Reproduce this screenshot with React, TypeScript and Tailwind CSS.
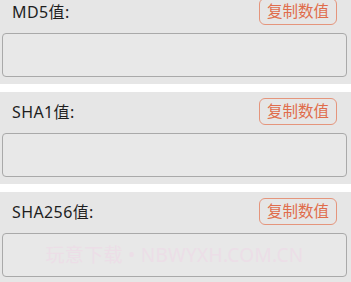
const rows = ["MD5值:", "SHA1值:", "SHA256值:"];

function HashRow({ label, mark }: { label: string; mark?: boolean }) {
  return (
    <div className="bg-[#e6e6e6] pt-[6px] pb-[7px]">
      <div className="flex items-center justify-between pl-3 pr-[14px]">
        <span className="text-[16px] text-[#1e1e1e] tracking-[0.4px]">{label}</span>
        <button className="h-[27px] w-[78px] rounded-[6px] border border-[#e5957c] text-[15.5px] leading-none text-[#e06c4b]">
          复制数值
        </button>
      </div>
      <div className="mt-2 ml-[2px] mr-[4px] flex h-[44px] items-center justify-center rounded-[4px] border border-[#a9a9a9] bg-[#e8e8e8]">
        {mark && (
          <span className="text-[19px] tracking-[0.3px] text-[#ecdee7]">玩意下载 • NBWYXH.COM.CN</span>
        )}
      </div>
    </div>
  );
}

export default function App() {
  return (
    <div
      className="h-[282px] w-[351px] overflow-hidden bg-white"
      style={{ fontFamily: '"Noto Sans", "Noto Sans CJK SC", sans-serif' }}
    >
      <div className="-mt-2 flex flex-col gap-2">
        {rows.map((r, i) => (
          <HashRow key={r} label={r} mark={i === 2} />
        ))}
      </div>
    </div>
  );
}
